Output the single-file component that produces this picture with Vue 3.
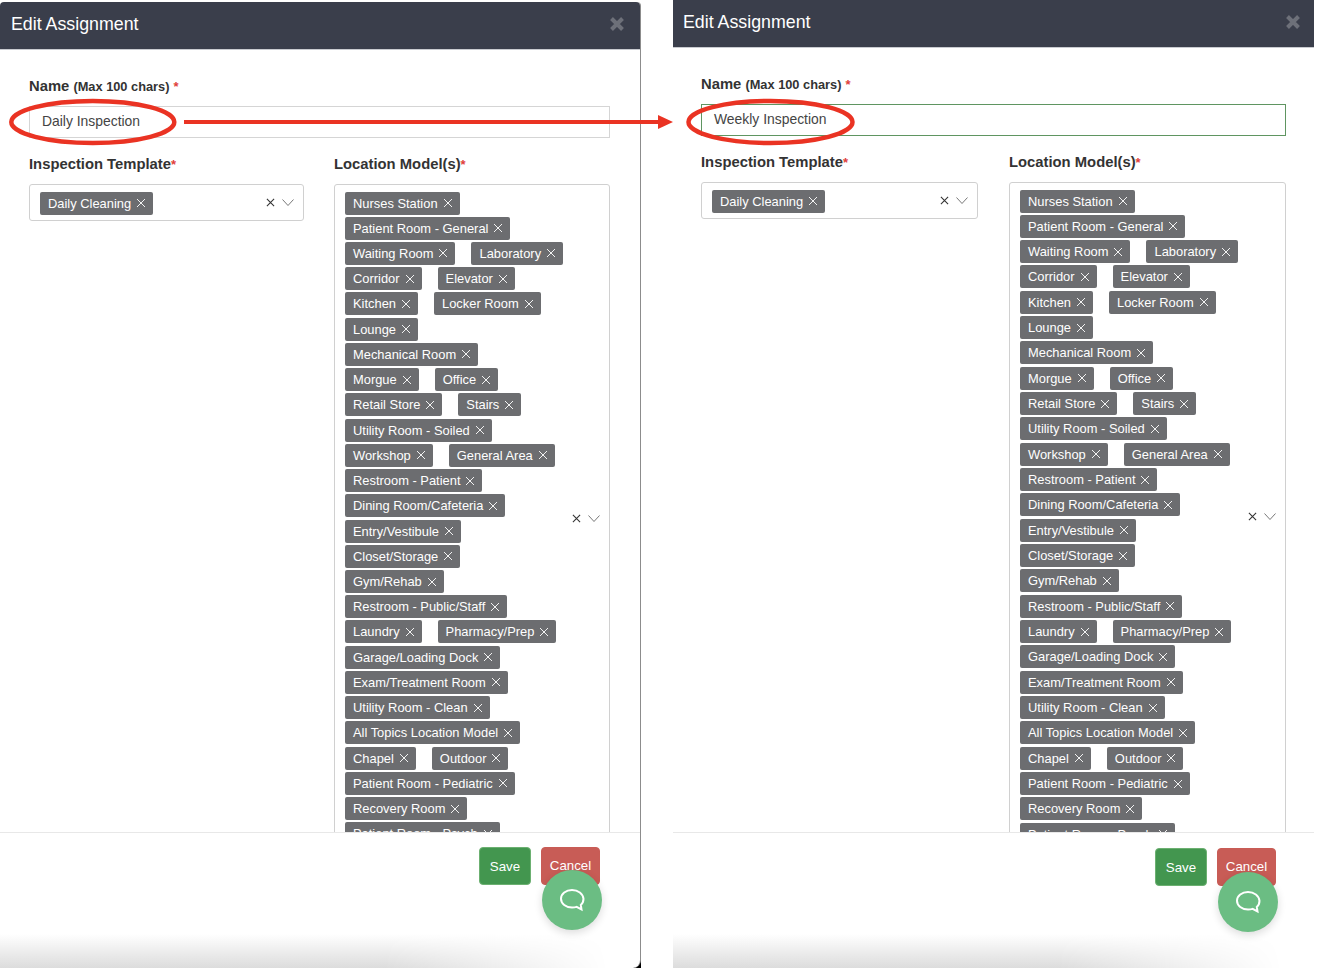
<script setup>
const rows = [
  ['Nurses Station'], ['Patient Room - General'], ['Waiting Room', 'Laboratory'], ['Corridor', 'Elevator'],
  ['Kitchen', 'Locker Room'], ['Lounge'], ['Mechanical Room'], ['Morgue', 'Office'], ['Retail Store', 'Stairs'],
  ['Utility Room - Soiled'], ['Workshop', 'General Area'], ['Restroom - Patient'], ['Dining Room/Cafeteria'],
  ['Entry/Vestibule'], ['Closet/Storage'], ['Gym/Rehab'], ['Restroom - Public/Staff'], ['Laundry', 'Pharmacy/Prep'],
  ['Garage/Loading Dock'], ['Exam/Treatment Room'], ['Utility Room - Clean'], ['All Topics Location Model'],
  ['Chapel', 'Outdoor'], ['Patient Room - Pediatric'], ['Recovery Room'], ['Patient Room - Psych']
]
const panels = [
  { id: 'left', value: 'Daily Inspection' },
  { id: 'right', value: 'Weekly Inspection' }
]
</script>

<template>
  <div class="page">
    <section v-for="p in panels" :key="p.id" class="panel" :class="p.id">
      <header class="head">
        <h1>Edit Assignment</h1>
        <svg class="close" viewBox="0 0 16 16" width="16" height="16"><path d="M2.500 2.500l11 11M13.500 2.500l-11 11" /></svg>
      </header>
      <div class="body">
        <label class="lbl">Name <small>(Max 100 chars)</small> <i>*</i></label>
        <div class="input">{{ p.value }}</div>
        <div class="cols">
          <div>
            <label class="lbl">Inspection Template<i>*</i></label>
            <div class="select template">
              <div class="tags">
                <div class="row"><span class="tag">Daily Cleaning<svg viewBox="0 0 10 10" width="10" height="10"><path d="M1 1l8 8M9 1l-8 8" /></svg></span></div>
              </div>
              <div class="ind">
                <svg viewBox="0 0 10 10" width="9" height="9"><path d="M1 1l8 8M9 1l-8 8" /></svg>
                <svg class="chev" viewBox="0 0 12 7" width="12" height="7"><path d="M.5.5L6 6.500 11.500.5" /></svg>
              </div>
            </div>
          </div>
          <div>
            <label class="lbl">Location Model(s)<i>*</i></label>
            <div class="select models">
              <div class="tags">
                <div v-for="r in rows" :key="r[0]" class="row">
                  <span v-for="t in r" :key="t" class="tag">{{ t }}<svg viewBox="0 0 10 10" width="10" height="10"><path d="M1 1l8 8M9 1l-8 8" /></svg></span>
                </div>
              </div>
              <div class="ind">
                <svg viewBox="0 0 10 10" width="9" height="9"><path d="M1 1l8 8M9 1l-8 8" /></svg>
                <svg class="chev" viewBox="0 0 12 7" width="12" height="7"><path d="M.5.5L6 6.500 11.500.5" /></svg>
              </div>
            </div>
          </div>
        </div>
      </div>
      <footer class="foot">
        <button class="btn save">Save</button>
        <button class="btn cancel">Cancel</button>
        <div class="fab">
          <svg viewBox="0 0 26 24" width="26" height="24"><path d="M13 2C6.900 2 2 5.900 2 10.800s4.900 8.800 11 8.800c1.600 0 3.200-.2 4.600-.7l4.900 2.600-.7-4.600c1.800-1.500 2.700-3.700 2.700-6.100C24 5.900 19.100 2 13 2z" /></svg>
        </div>
        <div class="fade"></div>
      </footer>
    </section>
    <svg class="notes" viewBox="0 0 1318 970" width="1318" height="970">
      <ellipse cx="92.800" cy="122" rx="81.500" ry="21" />
      <ellipse cx="770.500" cy="122" rx="82" ry="21" />
      <path class="line" d="M184 122H660" />
      <path class="head-arrow" d="M658 115l15 7-15 7z" />
    </svg>
  </div>
</template>

<style>
html, body { margin: 0; background: #fff; }
</style>

<style scoped>
.page {
  position: relative;
  isolation: isolate;
  display: flex;
  gap: 32px;
  width: 1318px;
  height: 970px;
  overflow: hidden;
  font-family: "Liberation Sans", Arial, sans-serif;
  color: #333;
}
.panel {
  position: relative;
  display: flex;
  flex-direction: column;
  width: 641px;
  box-sizing: border-box;
  background: #fff;
}
.panel.left {
  margin-top: 2px;
  height: 966px;
  border-right: 1px solid #8c8c8c;
  border-radius: 4px 4px 8px 0;
}
.panel.left::before {
  content: "";
  position: absolute;
  right: -1px;
  bottom: 0;
  width: 8px;
  height: 8px;
  background: #000;
  z-index: -1;
}
.panel.right { height: 968px; margin-top: 0; }
.head {
  flex: none;
  height: 48px;
  box-sizing: border-box;
  display: flex;
  align-items: center;
  justify-content: space-between;
  background: #3a3e4b;
  border-bottom: 1px solid #c9cbd0;
  color: #fff;
}
.left .head { padding: 0 15px 4px 11px; border-radius: 4px 4px 0 0; }
.right .head { padding: 0 13px 4px 10px; }
.head h1 { margin: 0; font-size: 17.800px; font-weight: 400; line-height: 24px; }
.close { fill: none; stroke: #6d7079; stroke-width: 4; }
.body {
  flex: none;
  box-sizing: border-box;
  overflow: hidden;
  height: 782px;
  padding: 27px 30px 0 29px;
}
.right .body { height: 784px; padding: 27px 28px 0; }
.lbl {
  display: block;
  font-size: 14.800px;
  line-height: 18px;
  font-weight: 700;
  color: #333;
}
.lbl small { font-size: 12.800px; }
.lbl i { font-style: normal; font-weight: 700; font-size: 13px; color: #e0403a; }
.input {
  box-sizing: border-box;
  height: 32px;
  margin: 10px 0 17px;
  padding: 0 12px;
  line-height: 28px;
  font-size: 13.900px;
  color: #444;
  border: 1px solid #d5d5d5;
}
.right .input { border: 1.500px solid #5f9561; }
.cols { display: grid; grid-template-columns: 275px 276px; column-gap: 30px; }
.right .cols { grid-template-columns: 277px 277px; column-gap: 31px; }
.select {
  box-sizing: border-box;
  margin-top: 10px;
  display: flex;
  border: 1px solid #d0d0d0;
  border-radius: 3px;
  padding: 6.500px 9px 0 10px;
}
.template { height: 37px; }
.models { height: 668px; padding-bottom: 0; }
.tags { flex: 1; min-width: 0; }
.row { display: flex; gap: 16px; height: 25.240px; }
.right .row { height: 25.340px; }
.tag {
  display: inline-flex;
  align-items: center;
  gap: 5px;
  box-sizing: border-box;
  height: 23px;
  padding: 0 7px 0 8px;
  font-size: 12.900px;
  color: #fff;
  background: #6c6d70;
  border-radius: 2px;
  white-space: nowrap;
}
.tag svg { fill: none; stroke: #f2f2f2; stroke-width: 1; }
.ind {
  flex: none;
  display: flex;
  align-items: center;
  gap: 7px;
  margin-top: -6.500px;
  height: calc(100% + 6.500px);
}
.ind svg { fill: none; stroke: #333; stroke-width: 1.200; }
.ind .chev { stroke: #555; stroke-width: .8; }
.foot {
  position: relative;
  flex: 1;
  border-top: 1px solid #e8e8e8;
  display: flex;
  justify-content: flex-end;
  align-items: flex-start;
  gap: 10px;
  padding: 14px 40px 0 0;
  box-sizing: border-box;
}
.right .foot { padding: 15px 38px 0 0; }
.btn {
  height: 38px;
  box-sizing: border-box;
  padding: 0;
  font-family: inherit;
  font-size: 13.300px;
  color: #fff;
  border-radius: 4px;
}
.save { width: 52px; background: #43964f; border: 1px solid #6cb071; }
.cancel { width: 59px; background: #c85c56; border: 1px solid #c85c56; padding-bottom: 2px; }
.fab {
  position: absolute;
  z-index: 2;
  top: 37px;
  right: 38px;
  width: 60px;
  height: 60px;
  border-radius: 50%;
  display: flex;
  align-items: center;
  justify-content: center;
  background: #6bbd83;
  box-shadow: 0 3px 8px rgba(0, 0, 0, .14);
}
.right .fab { top: 39px; right: 36px; }
.fab svg { fill: none; stroke: #fff; stroke-width: 2; }
.fade {
  position: absolute;
  left: 0;
  right: 0;
  bottom: 0;
  height: 34px;
  background: linear-gradient(to top, #dcdcdc, #fff);
  -webkit-mask-image: linear-gradient(to right, #000 60%, transparent 95%);
  mask-image: linear-gradient(to right, #000 60%, transparent 95%);
  border-radius: 0 0 8px 0;
}
.notes { position: absolute; left: 0; top: 0; pointer-events: none; z-index: 5; }
.notes ellipse { fill: none; stroke: #ea3323; stroke-width: 4.500; }
.line { fill: none; stroke: #ea3323; stroke-width: 4; }
.head-arrow { fill: #ea3323; }
</style>
